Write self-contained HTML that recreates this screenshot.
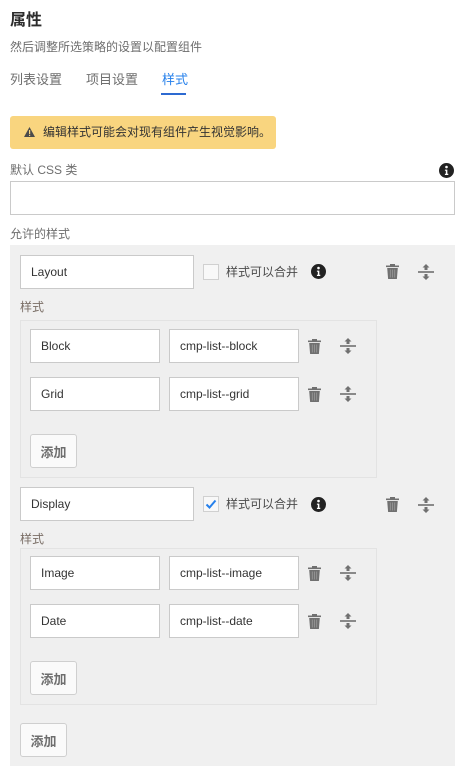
<!DOCTYPE html>
<html><head><meta charset="utf-8"><style>
*{box-sizing:border-box;margin:0;padding:0}
body{width:464px;height:772px;background:#fff;position:relative;overflow:hidden;font-family:"Liberation Sans","Noto Sans CJK SC",sans-serif;color:#4b4b4b}
.a{position:absolute}
.t{font-size:12px;line-height:16px;white-space:nowrap}
.inp{position:absolute;background:#fff;border:1px solid #cacaca;font-size:12px;color:#333;padding-left:10px;display:flex;align-items:center}
.btn{position:absolute;background:#fafafa;border:1px solid #cfcfcf;border-radius:3px;font-size:13px;font-weight:bold;color:#6e6e6e;display:flex;align-items:center;justify-content:center}
.panel{position:absolute;background:#f0f0f0}
.inner{position:absolute;border:1px solid #e3e3e3;background:#efefef}
</style></head><body>
<div class="a" style="left:10px;top:6px;font-size:16px;font-weight:bold;color:#2c2c2c">属性</div>
<div class="a t" style="left:10px;top:39px;color:#6e6e6e">然后调整所选策略的设置以配置组件</div>
<div class="a t" style="left:10px;top:72px;color:#6e6e6e;font-size:13px">列表设置</div>
<div class="a t" style="left:86px;top:72px;color:#6e6e6e;font-size:13px">项目设置</div>
<div class="a t" style="left:162px;top:72px;color:#2680eb;font-size:13px">样式</div>
<div class="a" style="left:161px;top:93px;width:25px;height:2px;background:#2d6ad1"></div>

<div class="a" style="left:10px;top:116px;width:266px;height:33px;background:#f9d57f;border-radius:3px"></div>
<svg class="a" style="left:24px;top:127px" width="11" height="10" viewBox="0 0 11 10"><path d="M5.5 0L11 10H0z" fill="#4b4b4b"/><rect x="5" y="3" width="1.2" height="4" fill="#f9d57f"/><rect x="5" y="7.8" width="1.2" height="1.2" fill="#f9d57f"/></svg>
<div class="a t" style="left:43px;top:124px;color:#333;font-size:12px">编辑样式可能会对现有组件产生视觉影响。</div>

<div class="a t" style="left:10px;top:162px;color:#6e6e6e">默认 CSS 类</div>
<svg class="a" style="left:439px;top:163px" width="15" height="15" viewBox="0 0 16 16"><circle cx="8" cy="8" r="8" fill="#222"/><circle cx="8" cy="4.3" r="1.4" fill="#fff"/><path d="M6.3 7h2.6v4.5h1v1.3H6.3v-1.3h1V8.3h-1z" fill="#fff"/></svg>
<div class="inp" style="left:10px;top:181px;width:445px;height:34px"></div>
<div class="a t" style="left:10px;top:226px;color:#6e6e6e">允许的样式</div>

<div class="panel" style="left:10px;top:245px;width:445px;height:521px"></div>

<div class="inp" style="left:20px;top:255px;width:174px;height:34px">Layout</div>
<div class="a" style="left:203px;top:264px;width:16px;height:16px;border:1px solid #d0d0d0;background:#f8f8f8"></div>
<div class="a t" style="left:226px;top:264px;color:#4b4b4b">样式可以合并</div>
<svg class="a" style="left:311px;top:264px" width="15" height="15" viewBox="0 0 16 16"><circle cx="8" cy="8" r="8" fill="#222"/><circle cx="8" cy="4.3" r="1.4" fill="#fff"/><path d="M6.3 7h2.6v4.5h1v1.3H6.3v-1.3h1V8.3h-1z" fill="#fff"/></svg>
<div class="a t" style="left:20px;top:299px;color:#7a6e66">样式</div>
<div class="inner" style="left:20px;top:320px;width:357px;height:158px"></div>
<div class="inp" style="left:30px;top:329px;width:130px;height:34px">Block</div>
<div class="inp" style="left:169px;top:329px;width:130px;height:34px">cmp-list--block</div>
<div class="inp" style="left:30px;top:377px;width:130px;height:34px">Grid</div>
<div class="inp" style="left:169px;top:377px;width:130px;height:34px">cmp-list--grid</div>
<div class="btn" style="left:30px;top:434px;width:47px;height:34px">添加</div>

<div class="inp" style="left:20px;top:487px;width:174px;height:34px">Display</div>
<div class="a" style="left:203px;top:496px;width:16px;height:16px;border:1px solid #d0d0d0;background:#f8f8f8"></div>
<svg class="a" style="left:205px;top:498px" width="12" height="12" viewBox="0 0 12 12"><path d="M1.5 6.5l3 3 6-7" stroke="#2680eb" stroke-width="2" fill="none"/></svg>
<div class="a t" style="left:226px;top:496px;color:#4b4b4b">样式可以合并</div>
<svg class="a" style="left:311px;top:497px" width="15" height="15" viewBox="0 0 16 16"><circle cx="8" cy="8" r="8" fill="#222"/><circle cx="8" cy="4.3" r="1.4" fill="#fff"/><path d="M6.3 7h2.6v4.5h1v1.3H6.3v-1.3h1V8.3h-1z" fill="#fff"/></svg>
<div class="a t" style="left:20px;top:531px;color:#7a6e66">样式</div>
<div class="inner" style="left:20px;top:548px;width:357px;height:157px"></div>
<div class="inp" style="left:30px;top:556px;width:130px;height:34px">Image</div>
<div class="inp" style="left:169px;top:556px;width:130px;height:34px">cmp-list--image</div>
<div class="inp" style="left:30px;top:604px;width:130px;height:34px">Date</div>
<div class="inp" style="left:169px;top:604px;width:130px;height:34px">cmp-list--date</div>
<div class="btn" style="left:30px;top:661px;width:47px;height:34px">添加</div>

<div class="btn" style="left:20px;top:723px;width:47px;height:34px">添加</div>

<svg width="0" height="0" style="position:absolute"><defs>
<g id="tr"><rect x="0" y="1.5" width="13" height="1.6" fill="#707070"/><rect x="4" y="0" width="5" height="2" fill="#707070"/><path d="M1.2 4h10.6l-0.9 11H2.1z" fill="#707070"/><path d="M4.3 5.5v8M6.5 5.5v8M8.7 5.5v8" stroke="#9a9a9a" stroke-width="0.8"/></g>
<g id="mv"><rect x="0" y="7.2" width="16" height="1.6" fill="#707070"/><path d="M8 0l3.5 3.5H9.5v2.5h-3V3.5H4.5z" fill="#707070"/><path d="M8 16l3.5-3.5H9.5V10h-3v2.5H4.5z" fill="#707070"/></g>
</defs></svg>
<svg class="a" style="left:386px;top:264px" width="13" height="15"><use href="#tr"/></svg>
<svg class="a" style="left:418px;top:264px" width="16" height="16"><use href="#mv"/></svg>
<svg class="a" style="left:308px;top:339px" width="13" height="15"><use href="#tr"/></svg>
<svg class="a" style="left:340px;top:338px" width="16" height="16"><use href="#mv"/></svg>
<svg class="a" style="left:308px;top:387px" width="13" height="15"><use href="#tr"/></svg>
<svg class="a" style="left:340px;top:386px" width="16" height="16"><use href="#mv"/></svg>
<svg class="a" style="left:386px;top:497px" width="13" height="15"><use href="#tr"/></svg>
<svg class="a" style="left:418px;top:497px" width="16" height="16"><use href="#mv"/></svg>
<svg class="a" style="left:308px;top:566px" width="13" height="15"><use href="#tr"/></svg>
<svg class="a" style="left:340px;top:565px" width="16" height="16"><use href="#mv"/></svg>
<svg class="a" style="left:308px;top:614px" width="13" height="15"><use href="#tr"/></svg>
<svg class="a" style="left:340px;top:613px" width="16" height="16"><use href="#mv"/></svg>
</body></html>
